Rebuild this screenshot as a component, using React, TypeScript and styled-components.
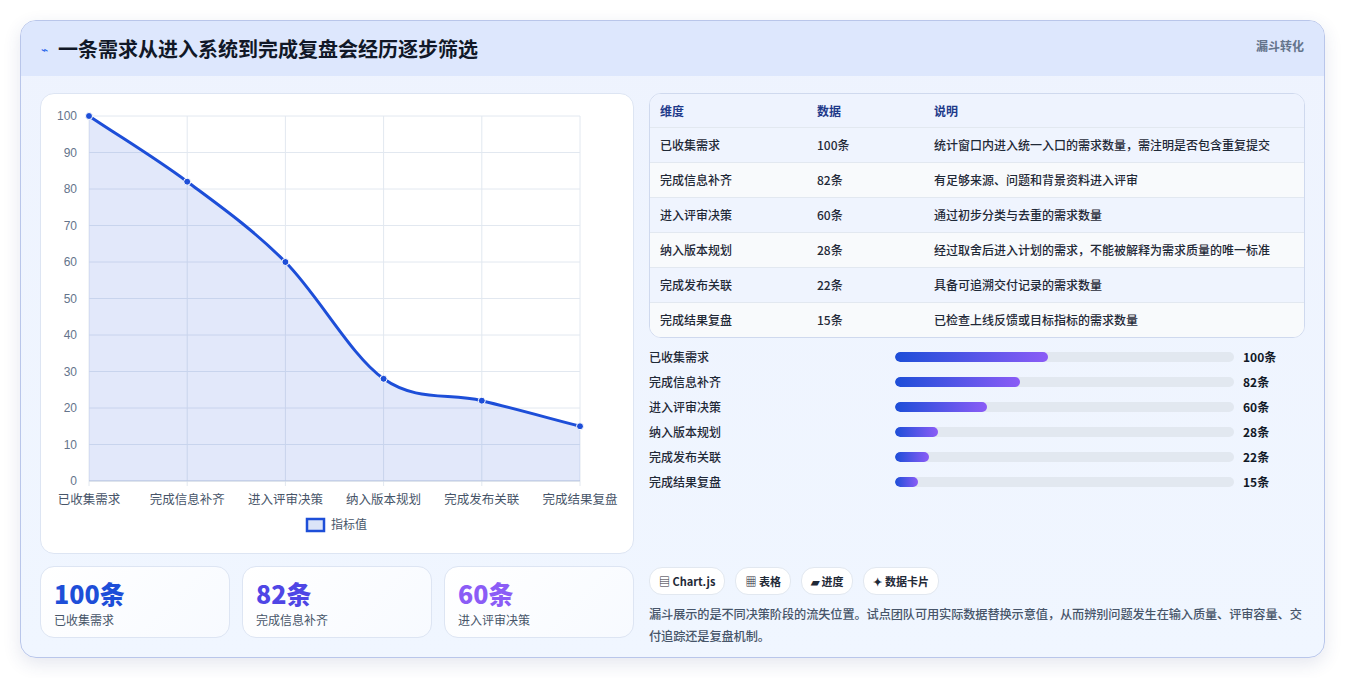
import React from "react";
import styled, { createGlobalStyle } from "styled-components";

const Global = createGlobalStyle`
  body { margin: 0; background: #fff; font-family: "Noto Sans CJK SC", "Noto Sans", sans-serif; }
`;
const Page = styled.div`padding: 20px; width: 1345px; height: 678px; box-sizing: border-box;`;
const Card = styled.div`
  width: 1305px; height: 638px; box-sizing: border-box; border: 1px solid #b9c6ea; border-radius: 16px;
  background: linear-gradient(180deg, #eef3fe 0%, #f0f6ff 100%); overflow: hidden;
  box-shadow: 0 6px 18px rgba(40,60,120,0.12); display: flex; flex-direction: column;
`;
const Header = styled.div`
  height: 55px; flex-shrink: 0; background: #dde7fd; display: flex; align-items: center; padding: 0 20px; gap: 10px; position: relative;
`;
const Title = styled.h1`margin: 0; font-size: 20px; font-weight: 700; color: #111827;`;
const Tag = styled.span`position: absolute; right: 20px; top: 16px; font-size: 12px; font-weight: 700; color: #64748b;`;
const Body = styled.div`display: flex; gap: 15px; padding: 17px 19px 0 19px;`;
const Left = styled.div`width: 594px; display: flex; flex-direction: column; gap: 12px;`;
const ChartCard = styled.div`height: 461px; background: #fff; border: 1px solid #dde5f3; border-radius: 14px; box-sizing: border-box;`;
const Stats = styled.div`display: flex; gap: 12px;`;
const Stat = styled.div`
  flex: 1; height: 72px; box-sizing: border-box; background: linear-gradient(135deg,#fff,#f7faff); border: 1px solid #dde5f3;
  border-radius: 14px; padding: 10px 13px;
`;
const StatNum = styled.div<{ c: string }>`font-size: 25px; font-weight: 800; color: ${p => p.c}; line-height: 32px;`;
const StatLabel = styled.div`font-size: 12px; color: #475569; margin-top: 2px;`;
const Right = styled.div`flex: 1; display: flex; flex-direction: column;`;
const Table = styled.div`border: 1px solid #cfd9ee; border-radius: 12px; overflow: hidden; background: #fff;`;
const Row = styled.div<{ head?: boolean; alt?: boolean }>`
  display: grid; grid-template-columns: 157px 117px 1fr; height: ${p => p.head ? 33 : 35}px; box-sizing: border-box; align-items: center; padding-left: 10px;
  font-size: 12px; line-height: 16px; color: ${p => p.head ? "#1e3a8a" : "#1f2937"}; font-weight: ${p => p.head ? 700 : 500};
  background: ${p => p.head ? "#eef3fe" : p.alt ? "#f8fafc" : "#eff4fe"};
  border-top: ${p => p.head ? "none" : "1px solid #e2e8f0"};
`;
const Bars = styled.div`display: flex; flex-direction: column; gap: 7px; margin-top: 10px;`;
const BarRow = styled.div`display: grid; grid-template-columns: 246px 339px 1fr; align-items: center; height: 18px; font-size: 12px; line-height: 16px; font-weight: 500; color: #1f2937;`;
const Track = styled.div`height: 10px; border-radius: 5px; background: #e2e8f0; overflow: hidden;`;
const Fill = styled.div`height: 100%; border-radius: 5px; background: linear-gradient(90deg,#1d4ed8,#8b5cf6);`;
const Val = styled.span`padding-left: 9px; font-weight: 700; color: #111827;`;
const Chips = styled.div`display: flex; gap: 10px; margin-top: 76px;`;
const Chip = styled.span`
  height: 26px; padding: 0 9px; display: inline-flex; align-items: center; gap: 4px; background: #fff; border: 1px solid #e2e8f0;
  border-radius: 13px; font-size: 11px; font-weight: 700; color: #1f2937;
`;
const Note = styled.p`margin: 8px 0 0; font-size: 12.2px; line-height: 22px; color: #475569; font-weight: 500; letter-spacing: -0.1px;`;

const vals = [100, 82, 60, 28, 22, 15];
const labels = ["已收集需求", "完成信息补齐", "进入评审决策", "纳入版本规划", "完成发布关联", "完成结果复盘"];
const desc = [
  "统计窗口内进入统一入口的需求数量，需注明是否包含重复提交",
  "有足够来源、问题和背景资料进入评审",
  "通过初步分类与去重的需求数量",
  "经过取舍后进入计划的需求，不能被解释为需求质量的唯一标准",
  "具备可追溯交付记录的需求数量",
  "已检查上线反馈或目标指标的需求数量",
];

const L = 48, R = 539, T = 22, B = 387;
const xs = vals.map((_, i) => L + (R - L) * i / 5);
const ys = vals.map(v => B - (B - T) * v / 100);
function smooth() {
  let d = `M${xs[0]},${ys[0]}`;
  for (let i = 0; i < 5; i++) {
    const x0 = xs[i], y0 = ys[i], x1 = xs[i + 1], y1 = ys[i + 1];
    const pm = i > 0 ? (ys[i + 1] - ys[i - 1]) / 2 : (y1 - y0);
    const pn = i < 4 ? (ys[i + 2] - ys[i]) / 2 : (y1 - y0);
    const dx = (x1 - x0) / 3;
    d += ` C${x0 + dx},${y0 + pm / 3} ${x1 - dx},${y1 - pn / 3} ${x1},${y1}`;
  }
  return d;
}
const line = smooth();

function Chart() {
  return (
    <svg width="592" height="459" style={{ display: "block" }}>
      {Array.from({ length: 11 }, (_, i) => {
        const y = B - (B - T) * i / 10;
        return (
          <g key={i}>
            <line x1={L} x2={R} y1={y} y2={y} stroke="#e2e8f0" />
            <text x={L - 12} y={y + 4} textAnchor="end" fontSize="12" fill="#64748b" fontFamily="Liberation Sans, sans-serif">{i * 10}</text>
          </g>
        );
      })}
      {xs.map((x, i) => <line key={i} x1={x} x2={x} y1={T} y2={B + 5} stroke="#e2e8f0" />)}
      <line x1={L} x2={R} y1={B} y2={B} stroke="#cbd5e1" />
      <path d={`${line} L${R},${B} L${L},${B} Z`} fill="rgba(29,78,216,0.13)" />
      <path d={line} fill="none" stroke="#1d4ed8" strokeWidth="3" />
      {xs.map((x, i) => <circle key={i} cx={x} cy={ys[i]} r="3.5" fill="#1d4ed8" stroke="#fff" strokeWidth="1" />)}
      {xs.map((x, i) => <text key={i} x={x} y={410} textAnchor="middle" fontSize="12.5" fill="#475569">{labels[i]}</text>)}
      <rect x={266} y={425} width={17} height={12} fill="#dbe4f8" stroke="#1d4ed8" strokeWidth="2.5" />
      <text x={290} y={435} fontSize="12" fill="#475569">指标值</text>
    </svg>
  );
}

export default function App() {
  return (
    <Page>
      <Global />
      <Card>
        <Header>
          <span style={{ color: "#2563eb", fontSize: 12 }}>⌁</span>
          <Title>一条需求从进入系统到完成复盘会经历逐步筛选</Title>
          <Tag>漏斗转化</Tag>
        </Header>
        <Body>
          <Left>
            <ChartCard><Chart /></ChartCard>
            <Stats>
              <Stat><StatNum c="#1d4ed8">100条</StatNum><StatLabel>已收集需求</StatLabel></Stat>
              <Stat><StatNum c="#4f46e5">82条</StatNum><StatLabel>完成信息补齐</StatLabel></Stat>
              <Stat><StatNum c="#8b5cf6">60条</StatNum><StatLabel>进入评审决策</StatLabel></Stat>
            </Stats>
          </Left>
          <Right>
            <Table>
              <Row head><span>维度</span><span>数据</span><span>说明</span></Row>
              {labels.map((l, i) => (
                <Row key={l} alt={i % 2 === 1}><span>{l}</span><span>{vals[i]}条</span><span>{desc[i]}</span></Row>
              ))}
            </Table>
            <Bars>
              {labels.map((l, i) => (
                <BarRow key={l}>
                  <span>{l}</span>
                  <Track><Fill style={{ width: `${vals[i] * 0.45}%` }} /></Track>
                  <Val>{vals[i]}条</Val>
                </BarRow>
              ))}
            </Bars>
            <Chips>
              <Chip>▤ Chart.js</Chip>
              <Chip>▦ 表格</Chip>
              <Chip>▰ 进度</Chip>
              <Chip>✦ 数据卡片</Chip>
            </Chips>
            <Note>漏斗展示的是不同决策阶段的流失位置。试点团队可用实际数据替换示意值，从而辨别问题发生在输入质量、评审容量、交付追踪还是复盘机制。</Note>
          </Right>
        </Body>
      </Card>
    </Page>
  );
}
